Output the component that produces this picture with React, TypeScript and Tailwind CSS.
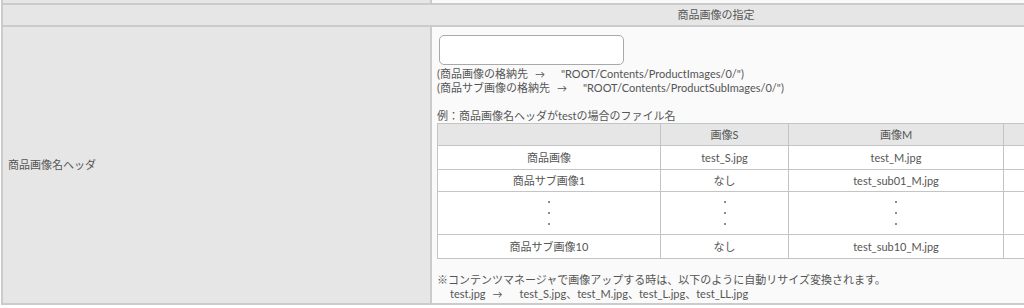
import React from "react";

const font = { fontFamily: 'Lato, "Noto Sans CJK JP", sans-serif' };

function Arrow({ l, r }: { l: string; r: string }) {
  return (
    <span className={`inline-block w-[10px] text-center text-[10px] ${l} ${r}`}>→</span>
  );
}

export default function App() {
  const cell = "border border-[#c4c4c4] text-center align-middle p-0";
  const row = (label: string, s: string, m: string, lg: string, ll: string, h: string) => (
    <tr className={`${h} bg-white`}>
      <td className={cell}>{label}</td>
      <td className={cell}>{s}</td>
      <td className={cell}>{m}</td>
      <td className={cell}>{lg}</td>
      <td className={cell}>{ll}</td>
    </tr>
  );
  return (
    <div
      className="w-[1024px] h-[308px] overflow-hidden bg-white text-[11px] leading-[14px] text-[#555]"
      style={font}
    >
      <div className="w-[1430px] ml-[1px] border-l-2 border-r-2 border-b-2 border-[#cbcbcb]">
        <div className="flex h-[3px]">
          <div className="w-[429px] bg-[#e6e6e6] border-r-2 border-[#cbcbcb]" />
          <div className="flex-1 bg-[#fafafa]" />
        </div>
        <div className="h-[24px] border-t-2 border-b-2 border-[#cbcbcb] bg-[#e6e6e6] flex items-center justify-center">
          商品画像の指定
        </div>
        <div className="flex h-[276px]">
          <div className="w-[429px] bg-[#e6e6e6] border-r-2 border-[#cbcbcb] flex items-center pl-[5px]">
            商品画像名ヘッダ
          </div>
          <div className="flex-1 bg-[#fafafa] pl-[5px] pt-[8px]">
            <div className="ml-[2px] w-[185px] h-[30px] rounded-[5px] border border-[#a9a9a9] bg-white" />
            <div className="mt-[2px] whitespace-nowrap">
              (商品画像の格納先<Arrow l="ml-[7px]" r="mr-[16px]" />"ROOT/Contents/ProductImages/0/")
            </div>
            <div className="whitespace-nowrap">
              (商品サブ画像の格納先<Arrow l="ml-[7px]" r="mr-[16px]" />"ROOT/Contents/ProductSubImages/0/")
            </div>
            <div className="h-[14px]" />
            <div>例：商品画像名ヘッダがtestの場合のファイル名</div>
            <table className="border-collapse table-fixed w-[980px]">
              <colgroup>
                <col className="w-[223px]" />
                <col className="w-[128px]" />
                <col className="w-[215px]" />
                <col className="w-[215px]" />
                <col className="w-[199px]" />
              </colgroup>
              <tbody>
                <tr className="h-[22px] bg-[#e6e6e6]">
                  <td className={cell}></td>
                  <td className={cell}>画像S</td>
                  <td className={cell}>画像M</td>
                  <td className={cell}>画像L</td>
                  <td className={cell}>画像LL</td>
                </tr>
                {row("商品画像", "test_S.jpg", "test_M.jpg", "test_L.jpg", "test_LL.jpg", "h-[24px]")}
                {row("商品サブ画像1", "なし", "test_sub01_M.jpg", "test_sub01_L.jpg", "test_sub01_LL.jpg", "h-[22px]")}
                <tr className="h-[43px] bg-white">
                  {[0, 1, 2, 3, 4].map((i) => (
                    <td key={i} className={cell}>
                      <div className="flex flex-col items-center gap-[9px] py-[1px]">
                        <span className="block w-[2px] h-[2px] rounded-full bg-[#666]" />
                        <span className="block w-[2px] h-[2px] rounded-full bg-[#666]" />
                        <span className="block w-[2px] h-[2px] rounded-full bg-[#666]" />
                      </div>
                    </td>
                  ))}
                </tr>
                {row("商品サブ画像10", "なし", "test_sub10_M.jpg", "test_sub10_L.jpg", "test_sub10_LL.jpg", "h-[24px]")}
              </tbody>
            </table>
            <div className="h-[14px]" />
            <div>※コンテンツマネージャで画像アップする時は、以下のように自動リサイズ変換されます。</div>
            <div className="whitespace-nowrap pl-[13px]">
              test.jpg
              <Arrow l="ml-[7px]" r="mr-[17px]" />
              test_S.jpg、test_M.jpg、test_L.jpg、test_LL.jpg
            </div>
          </div>
        </div>
      </div>
    </div>
  );
}
